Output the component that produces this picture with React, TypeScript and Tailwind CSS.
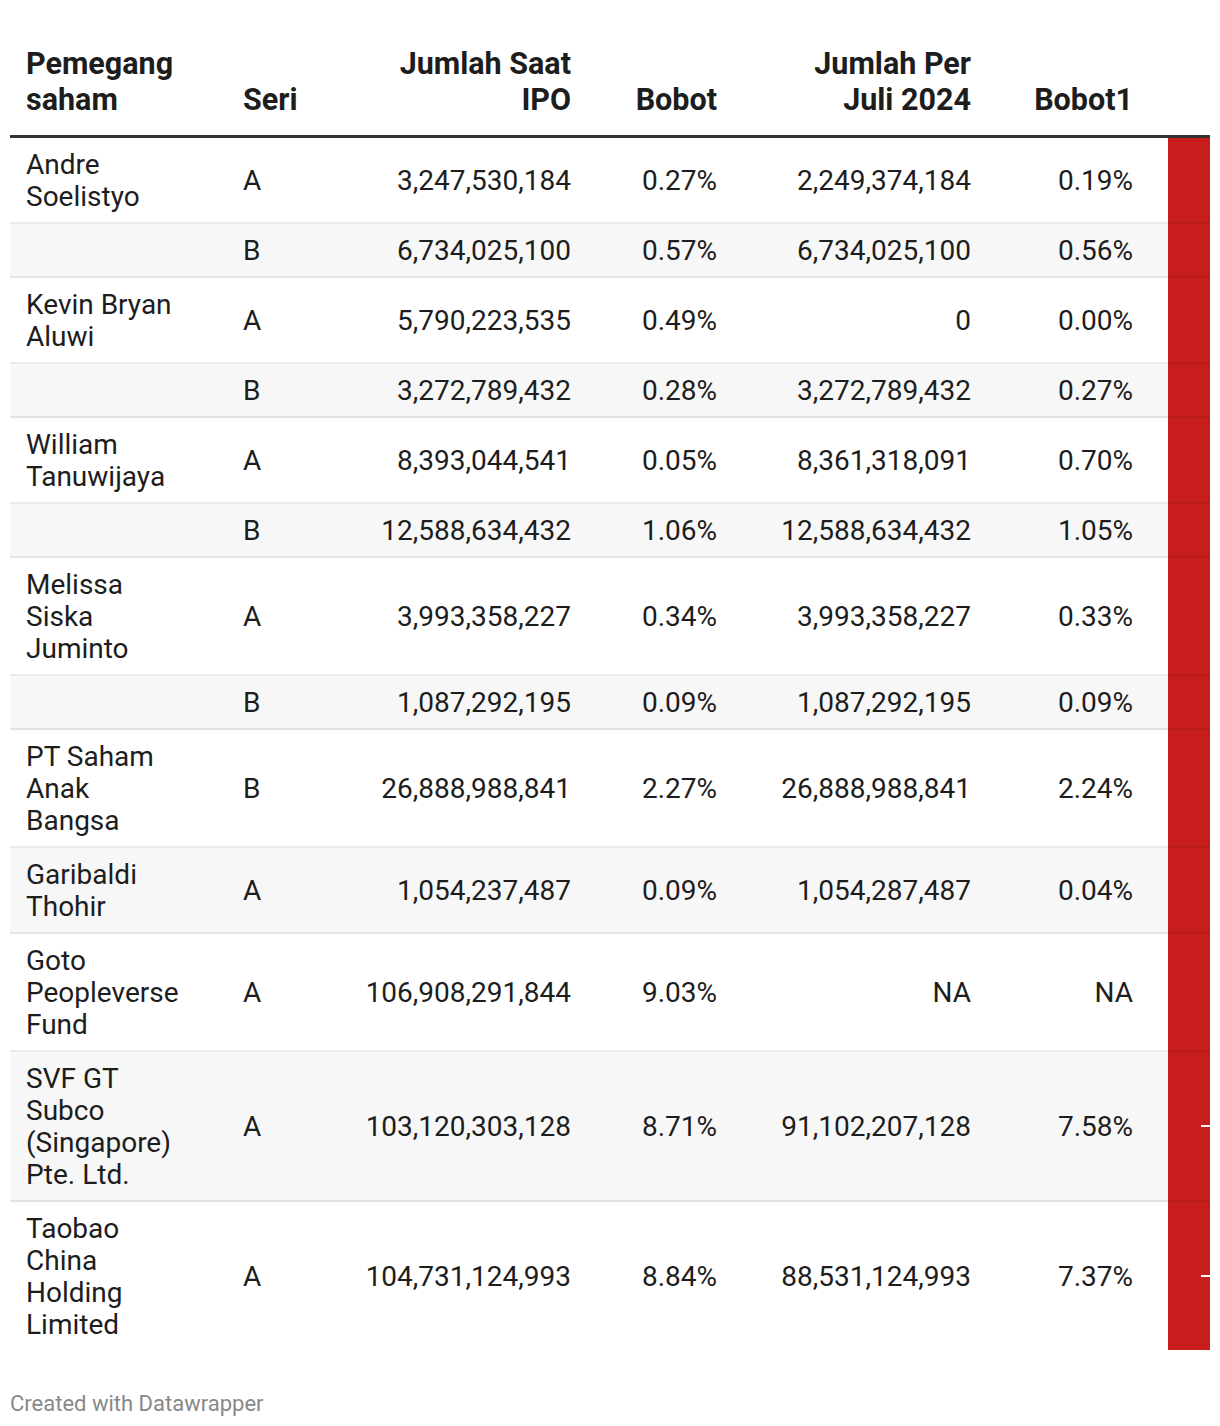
import React from "react";

type Row = {
	name: string;
	seri: string;
	ipo: string;
	bobot: string;
	juli: string;
	bobot1: string;
	tick?: boolean;
};

const rows: Row[] = [
	{ name: "Andre Soelistyo", seri: "A", ipo: "3,247,530,184", bobot: "0.27%", juli: "2,249,374,184", bobot1: "0.19%" },
	{ name: "", seri: "B", ipo: "6,734,025,100", bobot: "0.57%", juli: "6,734,025,100", bobot1: "0.56%" },
	{ name: "Kevin Bryan Aluwi", seri: "A", ipo: "5,790,223,535", bobot: "0.49%", juli: "0", bobot1: "0.00%" },
	{ name: "", seri: "B", ipo: "3,272,789,432", bobot: "0.28%", juli: "3,272,789,432", bobot1: "0.27%" },
	{ name: "William Tanuwijaya", seri: "A", ipo: "8,393,044,541", bobot: "0.05%", juli: "8,361,318,091", bobot1: "0.70%" },
	{ name: "", seri: "B", ipo: "12,588,634,432", bobot: "1.06%", juli: "12,588,634,432", bobot1: "1.05%" },
	{ name: "Melissa Siska Juminto", seri: "A", ipo: "3,993,358,227", bobot: "0.34%", juli: "3,993,358,227", bobot1: "0.33%" },
	{ name: "", seri: "B", ipo: "1,087,292,195", bobot: "0.09%", juli: "1,087,292,195", bobot1: "0.09%" },
	{ name: "PT Saham Anak Bangsa", seri: "B", ipo: "26,888,988,841", bobot: "2.27%", juli: "26,888,988,841", bobot1: "2.24%" },
	{ name: "Garibaldi Thohir", seri: "A", ipo: "1,054,237,487", bobot: "0.09%", juli: "1,054,287,487", bobot1: "0.04%" },
	{ name: "Goto Peopleverse Fund", seri: "A", ipo: "106,908,291,844", bobot: "9.03%", juli: "NA", bobot1: "NA" },
	{ name: "SVF GT Subco (Singapore) Pte. Ltd.", seri: "A", ipo: "103,120,303,128", bobot: "8.71%", juli: "91,102,207,128", bobot1: "7.58%", tick: true },
	{ name: "Taobao China Holding Limited", seri: "A", ipo: "104,731,124,993", bobot: "8.84%", juli: "88,531,124,993", bobot1: "7.37%", tick: true },
];

const cols = "grid grid-cols-[217px_124px_236px_146px_254px_162px_19px_42px]";

export default function App() {
	return (
		<div className="bg-white pb-[10px] font-['Roboto',sans-serif] text-[#1d1d1d]">
			<div className="mx-[10px] w-[1200px] pt-[46px]">
				<div className={`${cols} border-b-[3px] border-[#333] text-[30.5px] font-bold leading-[36px]`}>
					<div className="pb-[17px] pl-4">
						Pemegang
						<br />
						saham
					</div>
					<div className="flex items-end pb-[17px] pl-4">Seri</div>
					<div className="flex items-end justify-end pb-[17px] pr-4 text-right">
						<span>
							Jumlah Saat
							<br />
							IPO
						</span>
					</div>
					<div className="flex items-end justify-end pb-[17px] pr-4">Bobot</div>
					<div className="flex items-end justify-end pb-[17px] pr-4 text-right">
						<span>
							Jumlah Per
							<br />
							Juli 2024
						</span>
					</div>
					<div className="flex items-end justify-end pb-[17px] pr-4">Bobot1</div>
					<div />
					<div />
				</div>
				{rows.map((r, i) => {
					const line = i === rows.length - 1 ? "" : "border-b-2 border-black/[0.08]";
					const cell = `flex items-center pt-[11px] pb-[9px] ${line}`;
					return (
						<div key={i} className={`${cols} text-[28px] leading-[32px] ${i % 2 === 1 ? "bg-[#f7f7f7]" : "bg-white"}`}>
							<div className={`${cell} pl-4 pr-[51px]`}>{r.name}</div>
							<div className={`${cell} pl-4`}>{r.seri}</div>
							<div className={`${cell} justify-end pr-4`}>{r.ipo}</div>
							<div className={`${cell} justify-end pr-4`}>{r.bobot}</div>
							<div className={`${cell} justify-end pr-4`}>{r.juli}</div>
							<div className={`${cell} justify-end pr-4`}>{r.bobot1}</div>
							<div className={cell} />
							<div className={`flex items-center justify-end bg-[#c71e1d] ${line}`}>
								{r.tick && <div className="h-[2px] w-[9px] bg-white" />}
							</div>
						</div>
					);
				})}
			</div>
			<div className="ml-[10px] mt-[41px] text-[22px] leading-[26px] text-[#888]">Created with Datawrapper</div>
		</div>
	);
}
